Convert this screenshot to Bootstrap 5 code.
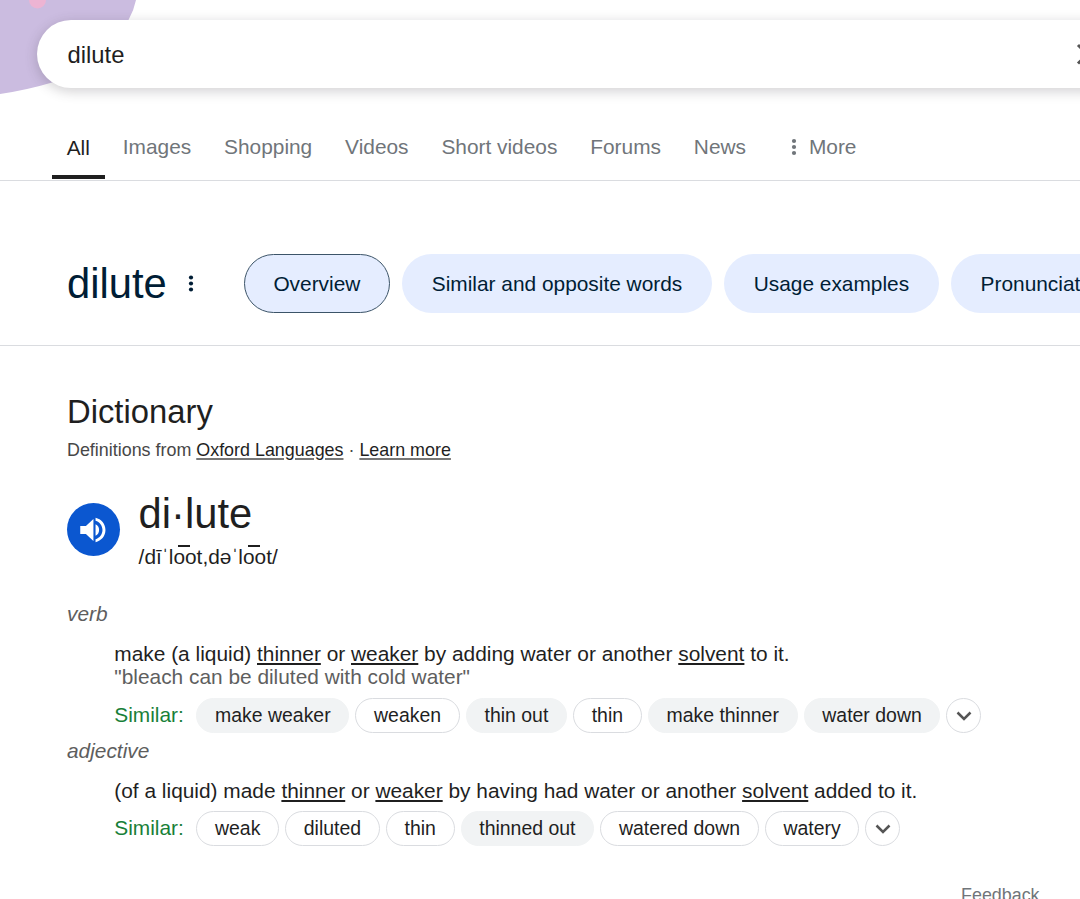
<!DOCTYPE html>
<html lang="en">
<head>
<meta charset="utf-8">
<meta name="viewport" content="width=device-width, initial-scale=1">
<title>dilute</title>
<link href="https://cdn.jsdelivr.net/npm/bootstrap@5.3.0/dist/css/bootstrap.min.css" rel="stylesheet">
<style>
body{font-family:"Liberation Sans",Arial,sans-serif;font-size:20.86px;line-height:24px;color:#1f1f1f;background:#fff;height:899px;overflow:hidden}
.top-area{height:181px;border-bottom:1px solid #dadce0;overflow:hidden}
.doodle{left:0;top:0;z-index:0}
.search-pill{margin:20px -40px 0 37px;height:67.5px;border-radius:34px;padding:2px 40px 0 30.5px;font-size:23.84px;z-index:1;box-shadow:0 3px 12px 1px rgba(64,60,67,.22)}
.tabs-row{height:91.5px;padding-left:51.7px;color:#70757a}
.tab-item{padding:47px 15px 0;margin-right:2.9px;white-space:nowrap}
.tab-item.current{color:#1f1f1f;padding-top:48px;height:91.5px;border-bottom:4px solid #1f1f1f}
.word-row{height:165px;padding:72.6px 0 0 67px;border-bottom:1px solid #dadce0;color:#001d35}
.word-head{width:176.6px;height:60px}
.word-title{font-size:41.72px;line-height:60px}
.topic{height:59.6px;padding:1px 29.8px 0;margin-right:11.9px;background:#e5edff;white-space:nowrap}
.topic.current{border:1px solid #3c5468;padding:1px 28.8px 0;height:59px}
.dict{padding:44px 0 0 67px}
.dict-title{font-size:32.8px;line-height:42px;font-weight:400;padding-top:.6px;height:42px}
.source{font-size:17.9px;line-height:24px;color:#474747;margin-top:6px}
.source a{color:#1f1f1f;text-decoration-color:#777;text-underline-offset:1.5px;text-decoration-thickness:1.5px}
.pron-row{margin-top:26px;height:114px}
.speaker{width:53px;height:53px;background:#0b57d0;margin:15px 19px 0 -.4px}
.headword{font-size:41.72px;line-height:51px}
.phonetic{line-height:24px;margin-top:6px}
.long-oo{position:relative}
.long-oo::after{content:"";position:absolute;left:5px;top:0;width:12px;height:2px;background:#1f1f1f}
.pos-label{color:#5e5e5e;font-style:italic}
.sense{margin:16px 0 0 47.3px}
.sense a{color:#1f1f1f;text-underline-offset:2px;text-decoration-thickness:1.7px}
.sense-text{font-size:20.88px}
.quote{color:#5e5e5e;margin-top:-.8px}
.similar{color:#188038;width:82px}
.similar,.syn{padding-bottom:1px!important}
.syn{height:35px;border-radius:18px;border:1px solid #dadce0;padding:0 17.7px;margin-right:6px;font-size:19.47px;white-space:nowrap}
.syn.filled{background:#f1f3f4;border-color:#f1f3f4}
.syn.more{width:35px;padding:0}
.feedback{font-size:17.88px;color:#70757a;padding-right:40.5px;margin-top:37px}
</style>
</head>
<body>
<header class="top-area position-relative d-flex flex-column">
  <svg class="doodle position-absolute" width="140" height="100" viewBox="0 0 140 100" aria-hidden="true">
    <path d="M0 0H136Q134 10 128.500 20C112 53 84 75 52 82.500Q27 90 0 94Z" fill="#cbbce0"/>
    <circle cx="37.500" cy="0" r="8.500" fill="#edb4d3"/>
  </svg>
  <div class="search-pill position-relative bg-white d-flex align-items-center justify-content-between flex-shrink-0">
    <span>dilute</span>
    <svg width="4" height="36" viewBox="0 0 4 36"><path d="M2 8 21.500 27.500M2 26.500 21.500 7" stroke="#555" stroke-width="3" fill="none"/></svg>
  </div>
  <nav class="tabs-row d-flex">
    <div class="tab-item current">All</div>
    <div class="tab-item">Images</div>
    <div class="tab-item">Shopping</div>
    <div class="tab-item">Videos</div>
    <div class="tab-item">Short videos</div>
    <div class="tab-item">Forums</div>
    <div class="tab-item">News</div>
    <div class="tab-item d-flex"><svg class="ms-2 me-2 flex-shrink-0" width="14" height="24" viewBox="0 0 14 24" fill="#70757a"><circle cx="7" cy="6" r="2.100"/><circle cx="7" cy="12" r="2.100"/><circle cx="7" cy="18" r="2.100"/></svg><span>More</span></div>
  </nav>
</header>
<section class="word-row d-flex overflow-hidden">
  <div class="word-head d-flex flex-shrink-0 align-items-center">
    <span class="word-title">dilute</span>
    <svg style="margin-left:18px" width="12" height="24" viewBox="0 0 12 24" fill="#001d35"><circle cx="6" cy="5.500" r="2.100"/><circle cx="6" cy="11.500" r="2.100"/><circle cx="6" cy="17.500" r="2.100"/></svg>
  </div>
  <div class="topic current rounded-pill d-flex align-items-center">Overview</div>
  <div class="topic rounded-pill d-flex align-items-center">Similar and opposite words</div>
  <div class="topic rounded-pill d-flex align-items-center">Usage examples</div>
  <div class="topic rounded-pill d-flex align-items-center">Pronunciation</div>
</section>
<main class="dict">
  <h2 class="dict-title mb-0">Dictionary</h2>
  <div class="source">Definitions from <a href="#">Oxford Languages</a> · <a href="#">Learn more</a></div>
  <div class="pron-row d-flex">
    <div class="speaker rounded-circle d-flex align-items-center justify-content-center flex-shrink-0">
      <svg width="34" height="34" viewBox="0 0 24 24" fill="#fff"><path d="M3 9.200v5.600h4l5.300 4.900V4.300L7 9.200H3zm10.800-1.200v8A4.500 4.500 0 0 0 16.300 12 4.500 4.500 0 0 0 13.800 8zM13.800 3.400v2.100c2.890.860 4.900 3.500 4.900 6.500s-2 5.640-4.900 6.500v2.100c4.010-.910 7-4.320 7-8.600s-2.990-7.690-7-8.600z"/></svg>
    </div>
    <div>
      <div class="headword">di·lute</div>
      <div class="phonetic">/dīˈl<span class="long-oo">oo</span>t,dəˈl<span class="long-oo">oo</span>t/</div>
    </div>
  </div>
  <div class="pos-label">verb</div>
  <div class="sense">
    <div class="sense-text">make (a liquid) <a href="#">thinner</a> or <a href="#">weaker</a> by adding water or another <a href="#">solvent</a> to it.</div>
    <div class="quote">"bleach can be diluted with cold water"</div>
    <div class="d-flex align-items-center" style="margin-top:8.8px">
      <span class="similar">Similar:</span>
      <span class="syn filled d-flex align-items-center">make weaker</span>
      <span class="syn d-flex align-items-center">weaken</span>
      <span class="syn filled d-flex align-items-center">thin out</span>
      <span class="syn d-flex align-items-center">thin</span>
      <span class="syn filled d-flex align-items-center">make thinner</span>
      <span class="syn filled d-flex align-items-center">water down</span>
      <span class="syn more d-flex align-items-center justify-content-center"><svg width="16" height="12" viewBox="0 0 16 12"><path d="M1.500 3.500 8 10 14.500 3.500" fill="none" stroke="#555" stroke-width="2.500"/></svg></span>
    </div>
  </div>
  <div class="pos-label" style="margin-top:6px">adjective</div>
  <div class="sense">
    <div class="sense-text">(of a liquid) made <a href="#">thinner</a> or <a href="#">weaker</a> by having had water or another <a href="#">solvent</a> added to it.</div>
    <div class="d-flex align-items-center" style="margin-top:8px">
      <span class="similar">Similar:</span>
      <span class="syn d-flex align-items-center">weak</span>
      <span class="syn d-flex align-items-center">diluted</span>
      <span class="syn d-flex align-items-center">thin</span>
      <span class="syn filled d-flex align-items-center">thinned out</span>
      <span class="syn d-flex align-items-center">watered down</span>
      <span class="syn d-flex align-items-center">watery</span>
      <span class="syn more d-flex align-items-center justify-content-center"><svg width="16" height="12" viewBox="0 0 16 12"><path d="M1.500 3.500 8 10 14.500 3.500" fill="none" stroke="#555" stroke-width="2.500"/></svg></span>
    </div>
  </div>
  <div class="feedback text-end">Feedback</div>
</main>
<script src="https://cdn.jsdelivr.net/npm/bootstrap@5.3.0/dist/js/bootstrap.bundle.min.js"></script>
</body>
</html>
